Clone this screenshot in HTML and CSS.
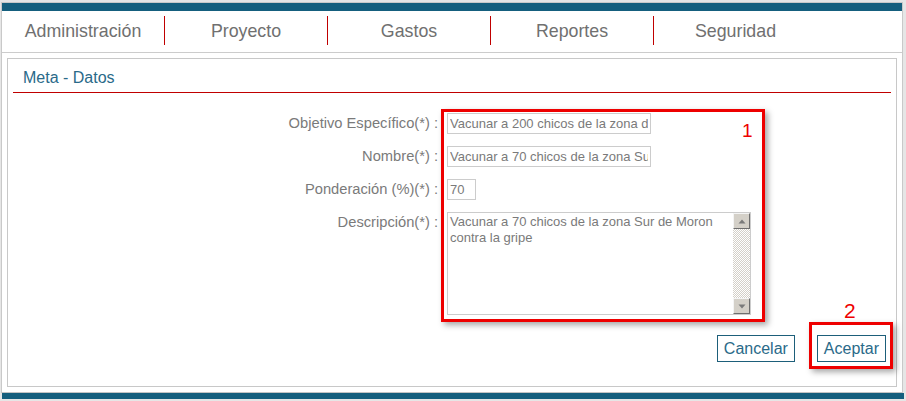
FILE: index.html
```html
<!DOCTYPE html>
<html lang="es">
<head>
<meta charset="utf-8">
<title>Meta - Datos</title>
<link rel="stylesheet" href="styles.css">
</head>
<body>
<div class="page">
  <div class="frame">
    <div class="topbar"></div>
    <nav class="nav">
      <div class="nav-item">Administración</div>
      <div class="nav-item">Proyecto</div>
      <div class="nav-item">Gastos</div>
      <div class="nav-item">Reportes</div>
      <div class="nav-item last">Seguridad</div>
    </nav>
    <div class="content">
      <div class="panel">
        <div class="panel-title">Meta - Datos</div>
        <form class="form">
          <label class="lbl">Objetivo Específico(*) :</label>
          <input class="field wide" type="text" value="Vacunar a 200 chicos de la zona de Moron contra la gripe">
          <label class="lbl">Nombre(*) :</label>
          <input class="field wide" type="text" value="Vacunar a 70 chicos de la zona Sur de Moron">
          <label class="lbl">Ponderación (%)(*) :</label>
          <input class="field small" type="text" value="70">
          <label class="lbl top">Descripción(*) :</label>
          <div class="tarea">
            <textarea class="tarea-text">Vacunar a 70 chicos de la zona Sur de Moron contra la gripe</textarea>
            <div class="sbar">
              <div class="sbtn"><svg width="8" height="5" viewBox="0 0 8 5"><path d="M4 0.5 L7.5 4.5 L0.5 4.5 Z" fill="#7a7a7a"/></svg></div>
              <div class="strack"></div>
              <div class="sbtn"><svg width="8" height="5" viewBox="0 0 8 5"><path d="M0.5 0.5 L7.5 0.5 L4 4.5 Z" fill="#7a7a7a"/></svg></div>
            </div>
          </div>
          <div class="actions">
            <button type="button" class="btn">Cancelar</button>
            <button type="button" class="btn">Aceptar</button>
          </div>
        </form>
      </div>
    </div>
  </div>
  <div class="bottombar"></div>

  <div class="mark mark-1"></div>
  <div class="num num-1">1</div>
  <div class="mark mark-2"></div>
  <div class="num num-2">2</div>
</div>
</body>
</html>
```

FILE: styles.css
```css
* { box-sizing: border-box; }
html, body { margin: 0; padding: 0; }
body {
  background: #e6e6e6;
  font-family: "Liberation Sans", Arial, sans-serif;
  width: 906px;
  height: 401px;
  overflow: hidden;
}
.page {
  position: relative;
  padding: 2px 0 0 1px;
  width: 906px;
  height: 401px;
}
.frame {
  width: 902px;
  border: 1px solid #c9c9c9;
  border-bottom-color: #c4c4c4;
  background: #ffffff;
}
.topbar {
  height: 8px;
  background: #155f7e;
}
.bottombar {
  margin-left: 1px;
  width: 902px;
  height: 6px;
  background: #155f7e;
}
.nav {
  display: flex;
  height: 42px;
  border-bottom: 1px solid #cccccc;
}
.nav-item {
  width: 163px;
  height: 29px;
  margin-top: 5px;
  border-right: 1px solid #c00000;
  display: flex;
  align-items: center;
  justify-content: center;
  font-size: 17.8px;
  color: #707070;
  padding-top: 2px;
}
.nav-item.last { border-right: none; }
.content {
  padding: 5px;
}
.panel {
  height: 329px;
  border: 1px solid #c8c8c8;
}
.panel-title {
  margin: 0 5px;
  height: 34px;
  border-bottom: 1px solid #c00000;
  padding: 10px 0 0 10px;
  font-size: 16px;
  color: #2a6a89;
}
.form {
  display: grid;
  grid-template-columns: 430px auto;
  column-gap: 9px;
  row-gap: 12px;
  margin-top: 20px;
  align-items: center;
}
.lbl {
  text-align: right;
  font-size: 14.7px;
  color: #7a7a7a;
  line-height: 21px;
}
.lbl.top { align-self: start; }
.field {
  height: 21px;
  border: 1px solid #cccccc;
  padding: 0 2px;
  font-family: "Liberation Sans", Arial, sans-serif;
  font-size: 13px;
  color: #7a7a7a;
  outline: none;
}
.field.wide { width: 204px; }
.field.small { width: 29px; }
.tarea {
  display: flex;
  width: 304px;
  height: 103px;
  border: 1px solid #cccccc;
}
.tarea-text {
  flex: 1;
  border: none;
  resize: none;
  padding: 1px 2px;
  margin: 0;
  font-family: "Liberation Sans", Arial, sans-serif;
  font-size: 13px;
  line-height: 16px;
  color: #7a7a7a;
  overflow: hidden;
  outline: none;
}
.sbar {
  width: 17px;
  display: flex;
  flex-direction: column;
}
.sbtn {
  height: 16px;
  background: #d4d0c8;
  border: 1px solid;
  border-color: #f4f4f4 #6e6e6e #6e6e6e #f4f4f4;
  display: flex;
  align-items: center;
  justify-content: center;
}
.strack {
  flex: 1;
  background: repeating-conic-gradient(#d4d0c8 0 25%, #ffffff 0 50%) 0 0 / 2px 2px;
}
.actions {
  grid-column: 1 / 3;
  display: flex;
  justify-content: flex-end;
  gap: 22px;
  margin-top: 8px;
  padding-right: 10px;
}
.btn {
  height: 27px;
  border: 1px solid #1d5f7a;
  background: #ffffff;
  color: #2a6a89;
  font-family: "Liberation Sans", Arial, sans-serif;
  font-size: 16px;
  padding: 0 6px;
}
.mark {
  position: absolute;
  border: 3px solid #ee0000;
  box-shadow: 3px 3px 6px rgba(0, 0, 0, 0.35);
}
.mark-1 { left: 441px; top: 109px; width: 324px; height: 213px; }
.mark-2 { left: 809px; top: 322px; width: 84px; height: 47px; }
.num {
  position: absolute;
  color: #ee0000;
  font-family: "Liberation Sans", Arial, sans-serif;
  line-height: 1;
}
.num-1 { left: 742px; top: 121px; font-size: 19px; }
.num-2 { left: 844px; top: 300px; font-size: 21px; }
```
